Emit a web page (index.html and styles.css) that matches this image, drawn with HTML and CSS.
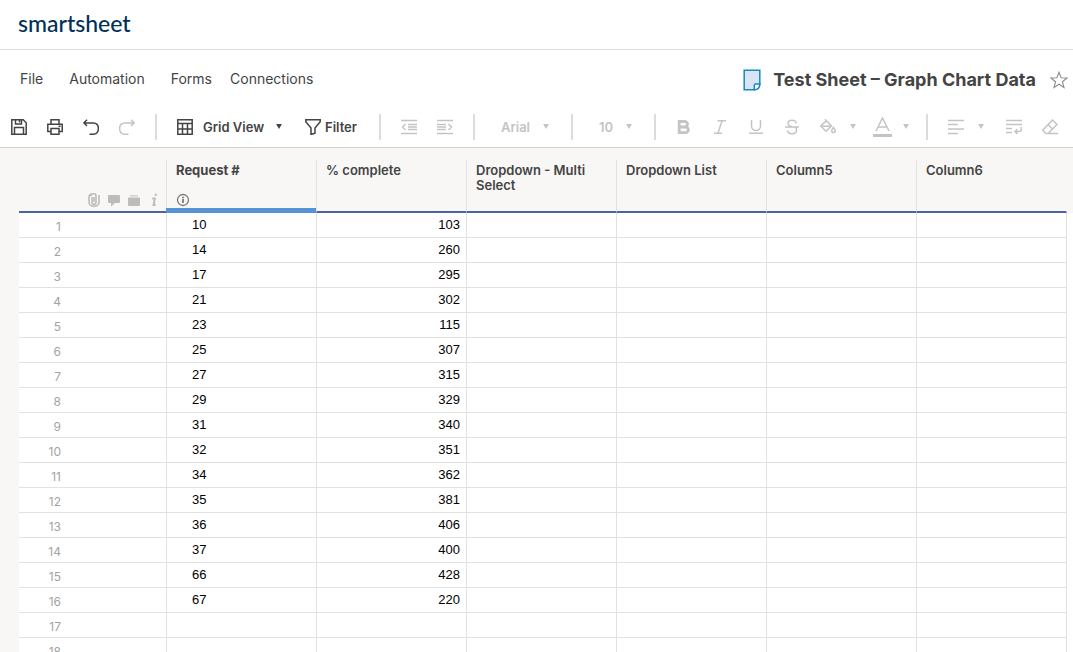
FILE: index.html
```html
<!DOCTYPE html>
<html lang="en">
<head>
<meta charset="utf-8">
<title>Test Sheet - Graph Chart Data</title>
<link rel="stylesheet" href="styles.css">
</head>
<body>
<header class="brand-bar"><a class="brand" href="#">smartsheet</a></header>

<div class="menu-bar">
  <nav class="menu">
    <a class="menu-item menu-item--wide" href="#">File</a>
    <a class="menu-item menu-item--wide" href="#">Automation</a>
    <a class="menu-item" href="#">Forms</a>
    <a class="menu-item" href="#">Connections</a>
  </nav>
  <div class="sheet-title">
    <svg class="sheet-icon" width="18" height="22" viewBox="0 0 18 22" fill="#d9e4fa" stroke="#1588c4" stroke-width="1.5"><path d="M1.2 1.2h15.6v14.3l-5 5.3H1.2z"/><path d="M11.3 20.8v-4.3a1.4 1.4 0 0 1 1.4-1.4h4.1c0 3.500-2 5.700-5.500 5.700z" fill="#fff"/></svg>
    <h1>Test Sheet – Graph Chart Data</h1>
    <button class="star" aria-label="Favorite"><svg width="18" height="18" viewBox="0 0 18 18" fill="none" stroke="#8d8d8d" stroke-width="1.100"><path d="M9 1.200l2.100 5.500 5.900.3-4.600 3.700 1.600 5.700L9 13.200l-5 3.200 1.600-5.700L1 7l5.900-.3z"/></svg></button>
  </div>
</div>

<div class="toolbar" role="toolbar" aria-label="Sheet tools">
  <button class="tool" aria-label="Save"><svg class="icon" viewBox="0 0 16 16"><path d="M.8.8h11.400l3 3v11.400H.8zM4.500 1v4h6V1M8.500 1.500v2M3.500 15V8.500h9V15"/></svg></button>
  <button class="tool" aria-label="Print"><svg class="icon" viewBox="0 0 16 16"><path d="M4 5V.8h8V5M4 12.500H.8V5.200h14.400v7.300H12M4 9.500h8v5.700H4zM11.500 7.300h2"/></svg></button>
  <button class="tool" aria-label="Undo"><svg class="icon" viewBox="0 0 16 16"><path d="M4 .8.900 3.900 4 7M1 3.900h9.500a4.800 4.800 0 0 1 4.800 5v1.300a4.800 4.800 0 0 1-4.800 5H6.500"/></svg></button>
  <button class="tool tool--off" aria-label="Redo" disabled><svg class="icon" viewBox="0 0 16 16"><path d="M12 .8l3.100 3.100L12 7M15 3.900H5.500a4.800 4.800 0 0 0-4.800 5v1.300a4.800 4.800 0 0 0 4.800 5h4"/></svg></button>
  <span class="divider"></span>
  <button class="tool tool--view"><svg class="icon" viewBox="0 0 16 16"><path d="M.8.8h14.400v14.400H.8zM1 4.500h14M1 10h14M5.500 4.500V15M10.500 4.500V15"/></svg><span>Grid View</span><svg class="caret" viewBox="0 0 7 6"><path d="M0 0h7L3.500 6z"/></svg></button>
  <button class="tool tool--filter"><svg class="icon" viewBox="0 0 16 16"><path d="M.8.8h14.400v2L10 9v5.200l-4 1.300V9L.8 2.800z"/></svg><span>Filter</span></button>
  <span class="divider"></span>
  <button class="tool tool--off" aria-label="Outdent" disabled><svg class="icon" viewBox="0 0 16 16"><path d="M0 1.500h16M0 14.500h16M7 5.500h9M7 8h9M7 10.500h9M4.500 5 1.500 8l3 3"/></svg></button>
  <button class="tool tool--off" aria-label="Indent" disabled><svg class="icon" viewBox="0 0 16 16"><path d="M0 1.500h16M0 14.500h16M0 5.500h9M0 8h9M0 10.500h9M11.500 5l3 3-3 3"/></svg></button>
  <span class="divider"></span>
  <label class="picker picker--font"><select aria-label="Font" disabled><option>Arial</option></select><svg class="caret" viewBox="0 0 7 6"><path d="M0 0h7L3.500 6z"/></svg></label>
  <span class="divider"></span>
  <label class="picker picker--size"><select aria-label="Font size" disabled><option>10</option></select><svg class="caret" viewBox="0 0 7 6"><path d="M0 0h7L3.500 6z"/></svg></label>
  <span class="divider"></span>
  <button class="tool tool--off" aria-label="Bold" disabled><svg class="icon icon--heavy" viewBox="0 0 16 16"><path d="M3.200 2.500h5.500a2.700 2.700 0 0 1 0 5.500H3.200zM3.200 8h6.300a2.800 2.800 0 0 1 0 5.600H3.200z"/></svg></button>
  <button class="tool tool--off" aria-label="Italic" disabled><svg class="icon" viewBox="0 0 16 16"><path d="M5.500 1.800H14M2 14.200h8M10 2 6 14"/></svg></button>
  <button class="tool tool--off" aria-label="Underline" disabled><svg class="icon" viewBox="0 0 16 16"><path d="M3.500 1v6a4.500 4.500 0 0 0 9 0V1M1 14.300h14"/></svg></button>
  <button class="tool tool--off" aria-label="Strikethrough" disabled><svg class="icon" viewBox="0 0 16 16"><path d="M12 4.500V4c0-1.500-1.500-2.700-4-2.700S4 2.400 4 4.200C4 6.500 6 7.200 8 7.800M1 8h14M12 8.500c.5 1 .5 1.500.5 2.500 0 2.200-1.800 3.700-4.500 3.700S3.700 13.500 3.700 11.500"/></svg></button>
  <button class="tool tool--split tool--off" aria-label="Fill color" disabled><svg class="icon" viewBox="0 0 16 16"><path d="M5 .3l6.500 6.700L6 12.300.8 7 6.300 1.600M1 7.200h10M13.400 8.500c-1 1.500-1.700 2.200-1.700 3.300a1.800 1.800 0 0 0 3.600 0c0-1.100-.900-1.800-1.900-3.300z"/></svg><svg class="caret" viewBox="0 0 7 6"><path d="M0 0h7L3.500 6z"/></svg></button>
  <button class="tool tool--split tool--color tool--off" aria-label="Text color" disabled><svg class="icon-color" width="19" height="20" viewBox="0 0 19 20"><path d="M3 14 9.500 1 16 14M5 10h9" fill="none" stroke="currentColor" stroke-width="1.500"/><path d="M0 17h19v3H0z" fill="currentColor"/></svg><svg class="caret" viewBox="0 0 7 6"><path d="M0 0h7L3.500 6z"/></svg></button>
  <span class="divider"></span>
  <button class="tool tool--align tool--off" aria-label="Align" disabled><svg class="icon" viewBox="0 0 16 16"><path d="M0 1.500h16M0 5.500h10M0 10h16M0 14.500h10"/></svg><svg class="caret" viewBox="0 0 7 6"><path d="M0 0h7L3.500 6z"/></svg></button>
  <button class="tool tool--off" aria-label="Wrap text" disabled><svg class="icon" viewBox="0 0 16 16"><path d="M0 1.500h16M0 5.500h16M0 9.500h6M0 13.500h6M15.300 8v2.500a2 2 0 0 1-2 2H9M11.500 10 9 12.500l2.500 2.500"/></svg></button>
  <button class="tool tool--off" aria-label="Clear format" disabled><svg class="icon" viewBox="0 0 16 16"><path d="M10.500 1l4.500 4.500-9 9H4l-3.300-3.300zM6 5.500l4.500 4.500M4 14.600h12"/></svg></button>
</div>

<main class="grid">
<table>
  <colgroup><col class="col-row"><col class="col-data"><col class="col-data"><col class="col-data"><col class="col-data"><col class="col-data"><col class="col-data"><col></colgroup>
  <thead>
    <tr>
      <th scope="col" aria-label="Row"><div class="head head--row">
        <svg width="14" height="14" viewBox="0 0 14 14" fill="none" stroke="#bcbcbc" stroke-width="1.600"><path d="M5 4v5.300a2 2 0 0 0 4 0V3.300a2.500 2.500 0 0 0-5-.500M7 4v5M2 3.500v5.800a5 4 0 0 0 10 0V2M2 4a3.200 3.200 0 0 1 3.200-3"/></svg>
        <svg width="14" height="14" viewBox="0 0 14 14" fill="#bcbcbc"><path d="M2 2h10a1 1 0 0 1 1 1v6a1 1 0 0 1-1 1H8l-4 3.500V10H2a1 1 0 0 1-1-1V3a1 1 0 0 1 1-1z"/></svg>
        <svg width="14" height="14" viewBox="0 0 14 14" fill="#bcbcbc"><path d="M3 2h8v1.500H3z" opacity=".7"/><path d="M2 4.500h10a1 1 0 0 1 1 1V12a1 1 0 0 1-1 1H2a1 1 0 0 1-1-1V5.500a1 1 0 0 1 1-1z"/></svg>
        <svg width="14" height="14" viewBox="0 0 14 14" fill="none" stroke="#bcbcbc" stroke-width="2"><path d="M7.800 1.800h2M5.300 5.500h2.500L6.600 12h2"/></svg>
      </div></th>
      <th scope="col" class="selected"><div class="head"><span>Request #</span>
        <svg width="14" height="14" viewBox="0 0 14 14" fill="none" stroke="#7a7a7a" stroke-width="1.300"><circle cx="7" cy="7" r="5.500"/><path d="M7 3.800v1.400M7 6v4" stroke-width="1.800"/></svg></div></th>
      <th scope="col"><div class="head">% complete</div></th>
      <th scope="col"><div class="head">Dropdown - Multi Select</div></th>
      <th scope="col"><div class="head">Dropdown List</div></th>
      <th scope="col"><div class="head">Column5</div></th>
      <th scope="col" class="last"><div class="head">Column6</div></th>
      <td></td>
    </tr>
  </thead>
  <tbody>
    <tr><th scope="row">1</th><td>10</td><td>103</td><td></td><td></td><td></td><td></td></tr>
    <tr><th scope="row">2</th><td>14</td><td>260</td><td></td><td></td><td></td><td></td></tr>
    <tr><th scope="row">3</th><td>17</td><td>295</td><td></td><td></td><td></td><td></td></tr>
    <tr><th scope="row">4</th><td>21</td><td>302</td><td></td><td></td><td></td><td></td></tr>
    <tr><th scope="row">5</th><td>23</td><td>115</td><td></td><td></td><td></td><td></td></tr>
    <tr><th scope="row">6</th><td>25</td><td>307</td><td></td><td></td><td></td><td></td></tr>
    <tr><th scope="row">7</th><td>27</td><td>315</td><td></td><td></td><td></td><td></td></tr>
    <tr><th scope="row">8</th><td>29</td><td>329</td><td></td><td></td><td></td><td></td></tr>
    <tr><th scope="row">9</th><td>31</td><td>340</td><td></td><td></td><td></td><td></td></tr>
    <tr><th scope="row">10</th><td>32</td><td>351</td><td></td><td></td><td></td><td></td></tr>
    <tr><th scope="row">11</th><td>34</td><td>362</td><td></td><td></td><td></td><td></td></tr>
    <tr><th scope="row">12</th><td>35</td><td>381</td><td></td><td></td><td></td><td></td></tr>
    <tr><th scope="row">13</th><td>36</td><td>406</td><td></td><td></td><td></td><td></td></tr>
    <tr><th scope="row">14</th><td>37</td><td>400</td><td></td><td></td><td></td><td></td></tr>
    <tr><th scope="row">15</th><td>66</td><td>428</td><td></td><td></td><td></td><td></td></tr>
    <tr><th scope="row">16</th><td>67</td><td>220</td><td></td><td></td><td></td><td></td></tr>
    <tr><th scope="row">17</th><td></td><td></td><td></td><td></td><td></td><td></td></tr>
    <tr><th scope="row">18</th><td></td><td></td><td></td><td></td><td></td><td></td></tr>
  </tbody>
</table>
</main>
</body>
</html>
```

FILE: styles.css
```css
* { box-sizing: border-box; }

body {
  margin: 0;
  height: 100vh;
  display: flex;
  flex-direction: column;
  overflow: hidden;
  background: #fff;
  color: #444;
  font-family: Inter, "Liberation Sans", sans-serif;
  font-size: 13px;
}

a { color: inherit; text-decoration: none; }

button {
  border: 0;
  padding: 0;
  background: none;
  color: inherit;
  font: inherit;
}

svg { display: block; flex: none; }

.brand-bar {
  display: flex;
  flex: none;
  align-items: center;
  height: 50px;
  padding: 0 18px 4px;
  border-bottom: 1px solid #e2e2e2;
}

.brand {
  color: #003059;
  font-family: Lato, sans-serif;
  font-size: 23px;
  font-weight: 500;
  line-height: 28px;
}

.menu-bar {
  display: flex;
  flex: none;
  align-items: center;
  justify-content: space-between;
  height: 58px;
  padding: 0 5px 0 20px;
}

.menu { display: flex; gap: 18px; padding-bottom: 2px; font-size: 14px; }
.menu-item--wide { padding-right: 8px; }

.sheet-title { display: flex; align-items: center; padding-top: 2px; }
.sheet-title h1 {
  margin: 0 14px 0 12px;
  font-family: Inter, sans-serif;
  font-size: 18px;
  font-weight: 700;
  line-height: 24px;
  white-space: nowrap;
}

.toolbar {
  display: flex;
  flex: none;
  align-items: center;
  height: 40px;
  padding: 0 1px 2px;
  border-bottom: 1px solid #d0d0d0;
  font-weight: 600;
}

.tool {
  display: flex;
  flex: none;
  align-items: center;
  width: 36px;
  height: 28px;
  padding-left: 10px;
  white-space: nowrap;
}

.tool--off { color: #c4c4c4; }
.tool--view { width: 128px; gap: 10px; }
.tool--view .caret { margin-left: 2px; }
.tool--filter { width: 74px; gap: 4px; }
.tool--split { width: 53px; gap: 14px; }
.tool--color { gap: 11px; }
.tool--align { width: 58px; gap: 14px; }

.icon {
  width: 16px;
  height: 16px;
  fill: none;
  stroke: currentColor;
  stroke-width: 1.5;
}
.icon--heavy { stroke-width: 2.8; }
.caret { width: 6px; height: 5px; fill: currentColor; }

.divider {
  flex: none;
  width: 2px;
  height: 26px;
  margin: 0 10px;
  background: #dcdcdc;
}

.picker {
  display: flex;
  flex: none;
  align-items: center;
  padding-left: 16px;
  color: #c4c4c4;
}
.picker--font { width: 76px; }
.picker--size { width: 61px; }
.picker select {
  width: 42px;
  padding: 0;
  border: 0;
  appearance: none;
  background: none;
  color: inherit;
  font: inherit;
  font-weight: 600;
  opacity: 1;
}
.picker--size select { width: 27px; }

.grid {
  flex: 1;
  min-height: 0;
  overflow: hidden;
  padding: 12px 0 0 19px;
  background: #f8f7f5;
}

table {
  width: 100%;
  table-layout: fixed;
  border-collapse: separate;
  border-spacing: 0;
}
.col-row { width: 148px; }
.col-data { width: 150px; }

thead th {
  position: relative;
  padding: 0;
  border-right: 1px solid #e2e2e2;
  border-bottom: 2px solid #4a64a4;
  text-align: left;
  vertical-align: top;
}
thead th.last { border-right-color: #f8f7f5; }

.head {
  display: flex;
  flex-direction: column;
  justify-content: space-between;
  height: 51px;
  padding: 3px 8px 4px 9px;
  font-weight: 600;
  line-height: 15px;
}
.head--row {
  flex-direction: row;
  align-items: flex-end;
  justify-content: flex-end;
  gap: 6px;
  padding-right: 5px;
}

.selected .head { font-weight: 700; }
.selected::after {
  content: "";
  position: absolute;
  right: 0;
  bottom: -2px;
  left: -1px;
  height: 5px;
  background: #5593d4;
}

tbody th, tbody td {
  height: 25px;
  padding: 2px 6px 0 25px;
  border-right: 1px solid #e2e2e2;
  border-bottom: 1px solid #e2e2e2;
  background: #fff;
  color: #000;
  font-family: "Liberation Sans", Arial, sans-serif;
  line-height: 20px;
  vertical-align: top;
}
tbody th {
  padding: 4px 105px 0 0;
  color: #a3a3a3;
  font-family: Inter, sans-serif;
  font-size: 12px;
  font-weight: 400;
  text-align: right;
}
tbody td:nth-child(3) { text-align: right; }
tbody tr::after {
  content: "";
  display: table-cell;
  background: #fff;
}
```
